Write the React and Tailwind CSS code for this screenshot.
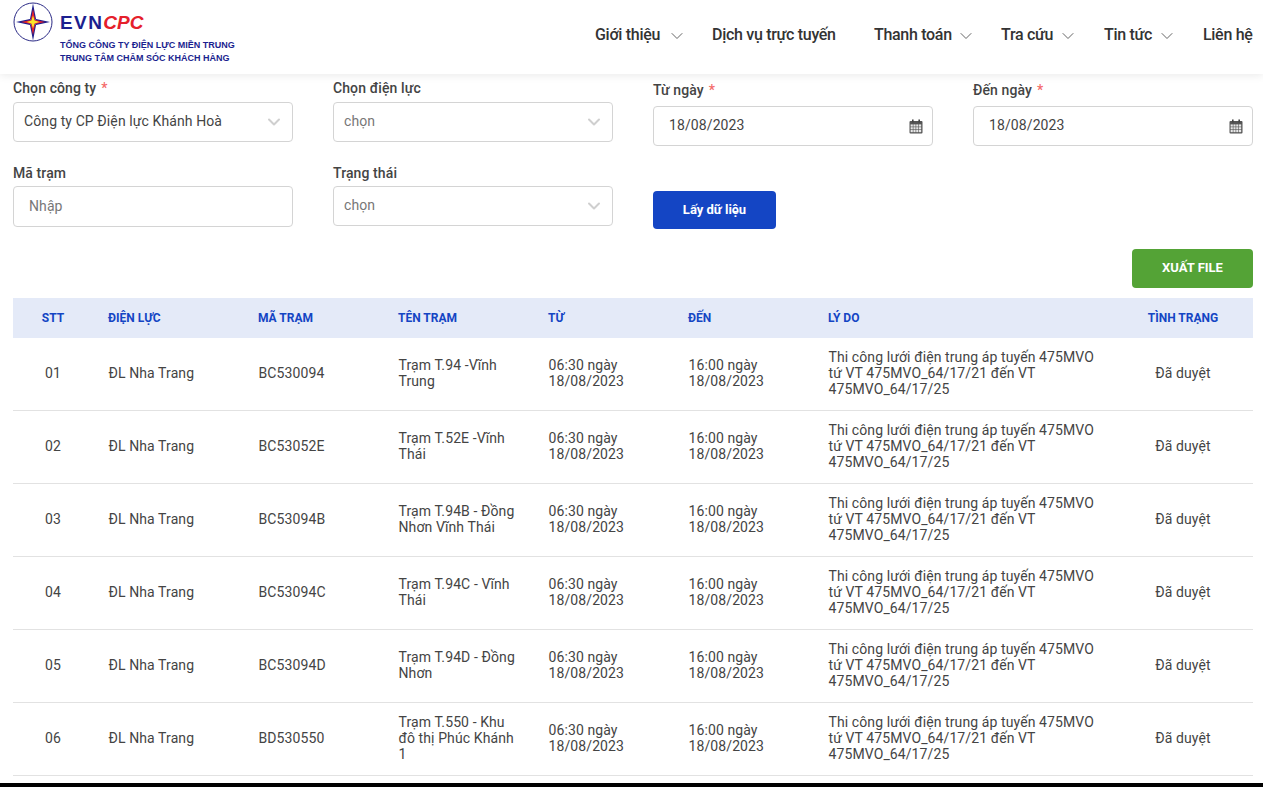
import React from "react";
import { ChevronDown } from "lucide-react";

const font = { fontFamily: "Roboto, sans-serif" };

function Logo() {
  return (
    <svg width="40" height="40" viewBox="0 0 40 40" className="block">
      <circle cx="20" cy="20" r="19" fill="#fff" stroke="#2b2a86" strokeWidth="1" />
      <path d="M20 1.5 L23 17 L20 20 L17 17 Z" fill="#1c1d8c" />
      <path d="M20 38.5 L23 23 L20 20 L17 23 Z" fill="#1c1d8c" />
      <path d="M3 20 L17 17 L20 20 L17 23 Z" fill="#1c1d8c" />
      <path d="M37 20 L23 17 L20 20 L23 23 Z" fill="#1c1d8c" />
      <path d="M20 7 L22 17 L20 20 L18 17 Z" fill="#e5202b" />
      <path d="M20 33 L22 23 L20 20 L18 23 Z" fill="#e5202b" />
      <path d="M8 20 L18 18 L20 20 L18 22 Z" fill="#e5202b" />
      <path d="M32 20 L22 18 L20 20 L22 22 Z" fill="#e5202b" />
      <path d="M20 13.5 L21.6 18.4 L26.5 20 L21.6 21.6 L20 26.5 L18.4 21.6 L13.5 20 L18.4 18.4 Z" fill="#fbe62a" />
    </svg>
  );
}

function CalendarIcon() {
  return (
    <svg width="14" height="15" viewBox="0 0 14 15" className="block">
      <rect x="0.5" y="2" width="13" height="12.5" rx="1" fill="#555" />
      <rect x="3" y="0.5" width="1.6" height="3" fill="#444" />
      <rect x="9.4" y="0.5" width="1.6" height="3" fill="#444" />
      <g fill="#e8e8e8">
        {[5.4, 8.2, 11].map((y) =>
          [1.6, 4.4, 7.2, 10].map((x) => <rect key={`${x}-${y}`} x={x} y={y} width="2.2" height="2.2" />)
        )}
      </g>
    </svg>
  );
}

function NavItem({ label, className = "" }) {
  return <span className={`block text-[16px] leading-[24px] font-medium text-[#333] whitespace-nowrap tracking-[-0.3px] ${className}`}>{label}</span>;
}

function NavChevron({ className = "" }) {
  return <ChevronDown size={20} strokeWidth={1.2} className={`text-[#666] shrink-0 mt-[2px] ${className}`} />;
}

function Label({ children, required, className = "" }) {
  return (
    <div className={`text-[14px] leading-[20px] font-medium text-[#444] tracking-[0.1px] ${className}`}>
      {children}
      {required && <span className="text-[#f46a6a] ml-[5px]">*</span>}
    </div>
  );
}

function SelectBox({ value, muted }) {
  return (
    <div className="h-10 border border-[#d4d4d4] rounded flex items-center justify-between pl-[10px] pr-[8px] pb-[2px] bg-white">
      <span className={`text-[14px] tracking-[0.1px] ${muted ? "text-[#777]" : "text-[#444]"}`}>{value}</span>
      <ChevronDown size={20} strokeWidth={2.4} className="text-[#cfcfcf] mt-[2px]" />
    </div>
  );
}

function DateBox({ value }) {
  return (
    <div className="h-10 border border-[#d4d4d4] rounded flex items-center justify-between pl-[15px] pr-[9px] bg-white">
      <span className="text-[14px] text-[#444] tracking-[0.1px] mb-[2px]">{value}</span>
      <CalendarIcon />
    </div>
  );
}

const rows = [
  ["01", "BC530094", "Trạm T.94 -Vĩnh Trung"],
  ["02", "BC53052E", "Trạm T.52E -Vĩnh Thái"],
  ["03", "BC53094B", "Trạm T.94B - Đồng Nhơn Vĩnh Thái"],
  ["04", "BC53094C", "Trạm T.94C - Vĩnh Thái"],
  ["05", "BC53094D", "Trạm T.94D - Đồng Nhơn"],
  ["06", "BD530550", "Trạm T.550 - Khu đô thị Phúc Khánh 1"],
];

const reason = "Thi công lưới điện trung áp tuyến 475MVO tứ VT 475MVO_64/17/21 đến VT 475MVO_64/17/25";

const cell = "border-b border-[#e2e2e2] pb-[3px]";

export default function App() {
  return (
    <div style={font} className="h-[787px] w-[1263px] overflow-hidden bg-white flex flex-col">
      <header className="h-[74px] shrink-0 bg-white shadow-[0_2px_8px_rgba(0,0,0,0.08)] flex justify-between pl-[13px] pr-[10px] relative z-10">
        <div className="flex pt-[2px]">
          <Logo />
          <div className="ml-[7px] pt-[11px]">
            <div className="flex items-center h-[18px] text-[19px] font-bold leading-none" style={{ fontFamily: "'Liberation Sans', sans-serif" }}>
              <span className="text-[#1b1f8f] tracking-[1.4px]">EVN</span>
              <span className="text-[#e5202b] italic">CPC</span>
            </div>
            <div className="mt-[8px] text-[9px] font-bold leading-[13px] text-[#1b1f8f] whitespace-nowrap" style={{ fontFamily: "'Liberation Sans', sans-serif" }}>
              <div>TỔNG CÔNG TY ĐIỆN LỰC MIỀN TRUNG</div>
              <div>TRUNG TÂM CHĂM SÓC KHÁCH HÀNG</div>
            </div>
          </div>
        </div>
        <nav className="flex items-center h-[69px]">
          <NavItem label="Giới thiệu" className="w-[71.5px]" />
          <NavChevron className="mr-[25.5px]" />
          <NavItem label="Dịch vụ trực tuyến" className="w-[162px]" />
          <NavItem label="Thanh toán" className="w-[82px]" />
          <NavChevron className="mr-[25px]" />
          <NavItem label="Tra cứu" className="w-[57px]" />
          <NavChevron className="mr-[26px]" />
          <NavItem label="Tin tức" className="w-[53px]" />
          <NavChevron className="mr-[26px]" />
          <NavItem label="Liên hệ" className="w-[50px]" />
        </nav>
      </header>

      <main className="flex-1 min-h-0 px-[13px] pr-[10px]">
        <section className="grid grid-cols-4 gap-x-10 h-[175px]">
          <div className="pt-[4px]">
            <Label required>Chọn công ty</Label>
            <div className="mt-[4px]"><SelectBox value="Công ty CP Điện lực Khánh Hoà" /></div>
            <Label className="mt-[21px]">Mã trạm</Label>
            <div className="mt-[3px] h-[41px] border border-[#d4d4d4] rounded flex items-center pl-[15px] text-[14px] text-[#777] tracking-[0.1px]">Nhập</div>
          </div>
          <div className="pt-[4px]">
            <Label>Chọn điện lực</Label>
            <div className="mt-[4px]"><SelectBox value="chọn" muted /></div>
            <Label className="mt-[21px]">Trạng thái</Label>
            <div className="mt-[3px]"><SelectBox value="chọn" muted /></div>
          </div>
          <div className="pt-[6px]">
            <Label required>Từ ngày</Label>
            <div className="mt-[6px]"><DateBox value="18/08/2023" /></div>
            <button className="mt-[45px] w-[123px] h-[38px] bg-[#1445c4] rounded text-white text-[13px] font-bold block">Lấy dữ liệu</button>
          </div>
          <div className="pt-[6px]">
            <Label required>Đến ngày</Label>
            <div className="mt-[6px]"><DateBox value="18/08/2023" /></div>
          </div>
        </section>

        <div className="flex justify-end">
          <button className="w-[121px] h-[39px] bg-[#54a336] rounded text-white text-[13px] font-bold pb-[2px]">XUẤT FILE</button>
        </div>

        <table className="mt-[10px] w-full table-fixed border-separate border-spacing-0 text-[14px] text-[#444] tracking-[0.1px]">
          <colgroup>
            <col className="w-[80px]" />
            <col className="w-[150px]" />
            <col className="w-[140px]" />
            <col className="w-[150px]" />
            <col className="w-[140px]" />
            <col className="w-[140px]" />
            <col className="w-[300px]" />
            <col className="w-[140px]" />
          </colgroup>
          <thead>
            <tr className="h-10 bg-[#e4eaf8] text-[12px] font-bold text-[#1445c4] tracking-normal">
              <th className="font-bold text-center">STT</th>
              <th className="font-bold text-left pl-[15px]">ĐIỆN LỰC</th>
              <th className="font-bold text-left pl-[15px]">MÃ TRẠM</th>
              <th className="font-bold text-left pl-[15px]">TÊN TRẠM</th>
              <th className="font-bold text-left pl-[15px]">TỪ</th>
              <th className="font-bold text-left pl-[15px]">ĐẾN</th>
              <th className="font-bold text-left pl-[15px]">LÝ DO</th>
              <th className="font-bold text-center">TÌNH TRẠNG</th>
            </tr>
          </thead>
          <tbody className="leading-[16px]">
            {rows.map(([stt, code, name]) => (
              <tr key={stt} className="h-[73px]">
                <td className={`${cell} text-center`}>{stt}</td>
                <td className={`${cell} pl-[15.5px]`}>ĐL Nha Trang</td>
                <td className={`${cell} pl-[15.5px]`}>{code}</td>
                <td className={`${cell} pl-[15.5px] pr-[15px]`}>{name}</td>
                <td className={`${cell} pl-[15.5px] pr-[30px]`}>06:30 ngày 18/08/2023</td>
                <td className={`${cell} pl-[15.5px] pr-[30px]`}>16:00 ngày 18/08/2023</td>
                <td className={`${cell} pl-[15.5px] pr-[15px]`}>{reason}</td>
                <td className={`${cell} text-center`}>Đã duyệt</td>
              </tr>
            ))}
          </tbody>
        </table>
      </main>
      <footer className="h-1 shrink-0 bg-black" />
    </div>
  );
}
